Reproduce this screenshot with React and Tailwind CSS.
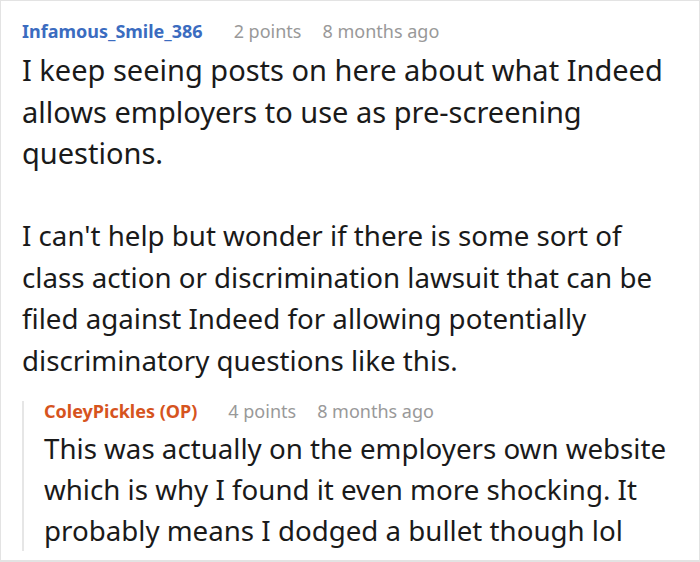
const Meta = ({ points, time }) => (
  <>
    <span className="ml-[31px] text-[#999999]">{points}</span>
    <span className="ml-[21px] text-[#999999]">{time}</span>
  </>
);

const Lines = ({ lines }) =>
  lines.map((line, i) => (
    <span key={i} className="block whitespace-nowrap">
      {line}
    </span>
  ));

const App = () => {
  return (
    <div
      className="w-[700px] h-[562px] bg-white border border-b-2 border-[#e3e3e3] overflow-hidden pl-[21px] pt-[17px]"
      style={{ fontFamily: '"Noto Sans", "Open Sans", sans-serif' }}
    >
      <div className="text-[18px] leading-[26px] whitespace-nowrap">
        <span className="font-bold text-[#3b6cc0]">Infamous_Smile_386</span>
        <Meta points="2 points" time="8 months ago" />
      </div>
      <div className="mt-[5px] leading-[41.5px] text-[#1a1a1a]">
        <p className="text-[29px]">
          <Lines
            lines={[
              "I keep seeing posts on here about what Indeed",
              "allows employers to use as pre-screening",
              "questions.",
            ]}
          />
        </p>
        <p className="mt-[41.5px] text-[27.7px]">
          <Lines
            lines={[
              "I can't help but wonder if there is some sort of",
              "class action or discrimination lawsuit that can be",
              "filed against Indeed for allowing potentially",
              "discriminatory questions like this.",
            ]}
          />
        </p>
      </div>
      <div className="mt-[20px] border-l-2 border-[#e6e6e6] pl-[20px]">
        <div className="text-[18px] leading-[20px] whitespace-nowrap">
          <span className="font-bold text-[#d6541e]">ColeyPickles (OP)</span>
          <Meta points="4 points" time="8 months ago" />
        </div>
        <p className="mt-[7px] -mb-[8px] text-[27.7px] leading-[41px] text-[#1a1a1a]">
          <Lines
            lines={[
              "This was actually on the employers own website",
              "which is why I found it even more shocking. It",
              "probably means I dodged a bullet though lol",
            ]}
          />
        </p>
      </div>
    </div>
  );
};

export default App;
